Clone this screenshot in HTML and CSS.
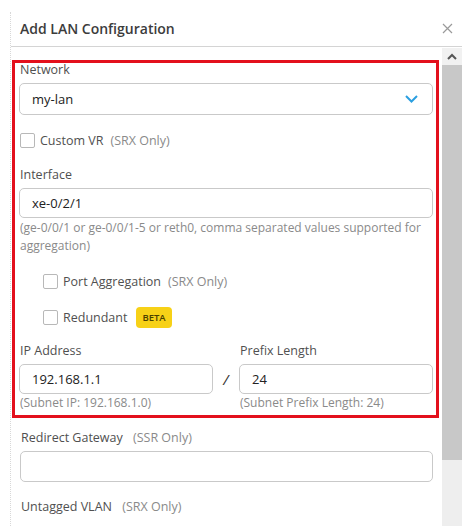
FILE: index.html
```html
<!DOCTYPE html>
<html lang="en">
<head>
    <meta charset="UTF-8">
    <title>Add LAN Configuration</title>
    <link rel="stylesheet" href="styles.css">
</head>
<body>
    <div class="modal">
        <!-- Header -->
        <div class="modal-header">
            <span class="modal-title">Add LAN Configuration</span>
            <svg class="close-icon" width="11" height="11" viewBox="0 0 11 11">
                <path d="M1 1 L10 10 M10 1 L1 10" stroke="#9a9a9a" stroke-width="1.2" fill="none"/>
            </svg>
        </div>

        <div class="modal-body">
            <div class="form">
                <!-- Highlighted block -->
                <div class="highlight">
                    <div class="label first">Network</div>
                    <div class="select">
                        <span>my-lan</span>
                        <svg class="chevron" width="13" height="8" viewBox="0 0 13 8">
                            <polyline points="1,1 6.5,6.5 12,1" stroke="#2b9fe0" stroke-width="2" fill="none"/>
                        </svg>
                    </div>

                    <div class="check-row custom-vr">
                        <span class="checkbox"></span>
                        <span class="check-text">Custom VR</span>
                        <span class="note">(SRX Only)</span>
                    </div>

                    <div class="label interface">Interface</div>
                    <div class="input">xe-0/2/1</div>
                    <div class="help">(ge-0/0/1 or ge-0/0/1-5 or reth0, comma separated values supported for aggregation)</div>

                    <div class="check-row nested port-agg">
                        <span class="checkbox"></span>
                        <span class="check-text">Port Aggregation</span>
                        <span class="note">(SRX Only)</span>
                    </div>

                    <div class="check-row nested redundant">
                        <span class="checkbox"></span>
                        <span class="check-text">Redundant</span>
                        <span class="badge">BETA</span>
                    </div>

                    <div class="ip-grid">
                        <div class="label">IP Address</div>
                        <div></div>
                        <div class="label">Prefix Length</div>
                        <div class="input">192.168.1.1</div>
                        <div class="slash">/</div>
                        <div class="input">24</div>
                        <div class="help">(Subnet IP: 192.168.1.0)</div>
                        <div></div>
                        <div class="help">(Subnet Prefix Length: 24)</div>
                    </div>
                </div>

                <div class="plain">
                    <div class="label gateway">Redirect Gateway <span class="note">(SSR Only)</span></div>
                    <div class="input tall"></div>
                    <div class="label vlan">Untagged VLAN <span class="note">(SRX Only)</span></div>
                </div>
            </div>

            <!-- Fake scrollbar -->
            <div class="scrollbar">
                <div class="scroll-up">
                    <svg width="10" height="7" viewBox="0 0 10 7">
                        <polyline points="1,6 5,2 9,6" stroke="#555" stroke-width="2" fill="none"/>
                    </svg>
                </div>
                <div class="scroll-thumb"></div>
                <div class="scroll-track"></div>
            </div>
        </div>
    </div>
</body>
</html>
```

FILE: styles.css
```css
/* Base */
body {
    margin: 0;
    background: #fff;
    font-family: 'Open Sans', 'Noto Sans', sans-serif;
    font-size: 12.5px;
    color: #4a4a4a;
    overflow: hidden;
}
.modal {
    margin: 12px 5px 0 10px;
    border-left: 1px dotted #d8d8d8;
    height: 514px;
    box-sizing: border-box;
}
.modal-header {
    height: 35px;
    box-sizing: border-box;
    border-bottom: 1px solid #d4d4d4;
    display: flex;
    align-items: center;
    justify-content: space-between;
    padding: 0 9px 2px 9px;
}
.modal-title {
    font-weight: 600;
    font-size: 14px;
    color: #3c3c3c;
}
.close-icon {
    margin-top: 1px;
}
.modal-body {
    display: flex;
    height: 479px;
}
.form {
    flex: 1;
    padding-top: 13px;
}

/* Red highlight box */
.highlight {
    border: 3px solid #e3101c;
    margin: 0 3px 0 1px;
    padding: 0 3px 4px 4px;
}
.plain {
    padding: 0 9px 0 9px;
}
.label {
    line-height: 14px;
    padding-left: 1px;
    color: #505050;
}
.label.first { margin-top: 0; }
.label.interface { margin-top: 20px; }
.label.gateway { margin-top: 13px; }
.label.vlan { margin-top: 18px; }
.note {
    color: #8a8a8a;
    margin-left: 7px;
}

/* Inputs */
.select, .input {
    box-sizing: border-box;
    border: 1px solid #c9c9c9;
    border-radius: 5px;
    margin-top: 6px;
    padding: 0 12px;
    display: flex;
    align-items: center;
    color: #222;
    font-size: 13px;
}
.select {
    height: 32px;
    justify-content: space-between;
}
.chevron {
    margin-right: 2px;
}
.input {
    height: 30px;
}
.input.tall {
    height: 31px;
}
.help {
    line-height: 18px;
    margin-top: 1px;
    padding-left: 1px;
    color: #8a8a8a;
    font-size: 12px;
}

/* Checkboxes */
.check-row {
    display: flex;
    align-items: center;
    padding-left: 1px;
    line-height: 15px;
}
.check-row.nested {
    padding-left: 24px;
}
.checkbox {
    width: 15px;
    height: 15px;
    box-sizing: border-box;
    border: 1px solid #b8b8b8;
    border-radius: 2px;
    margin-right: 5px;
}
.check-text {
    color: #505050;
}
.custom-vr { margin-top: 18px; }
.port-agg { margin-top: 19px; }
.redundant { margin-top: 18px; }
.badge {
    background: #f7d117;
    color: #4a4000;
    font-size: 9.5px;
    font-weight: 600;
    border-radius: 4px;
    padding: 0 6px;
    line-height: 21px;
    margin-left: 9px;
}

/* IP row */
.ip-grid {
    display: grid;
    grid-template-columns: 1fr 26px 1fr;
    margin-top: 16px;
}
.ip-grid .help {
    margin-top: 1px;
    line-height: 16px;
}
.slash {
    margin-top: 6px;
    display: flex;
    align-items: center;
    justify-content: center;
    color: #333;
    font-size: 15px;
    font-style: italic;
}

/* Scrollbar drawn by hand */
.scrollbar {
    width: 20px;
    display: flex;
    flex-direction: column;
    margin-top: 1px;
}
.scroll-up {
    height: 17px;
    background: #f1f1f1;
    display: flex;
    align-items: center;
    justify-content: center;
}
.scroll-thumb {
    height: 395px;
    background: #c8c8c8;
}
.scroll-track {
    flex: 1;
    background: #eeeeee;
}
```
